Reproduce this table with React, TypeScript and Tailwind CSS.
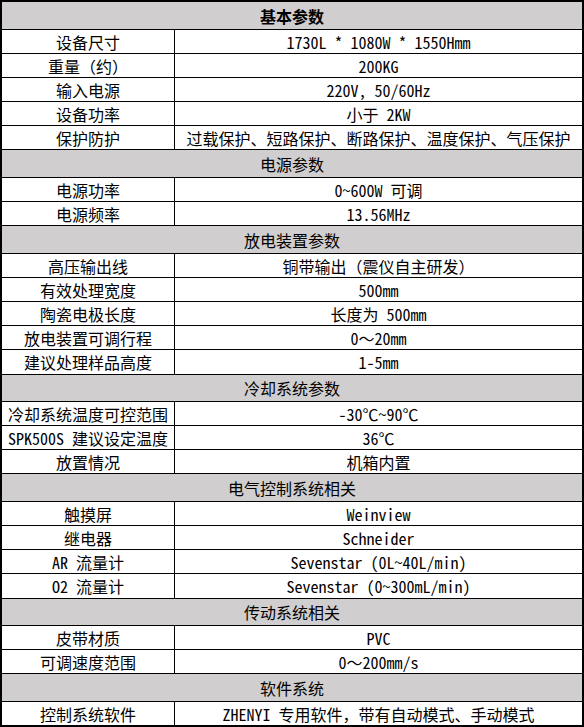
type Row = [string, string];

interface Section {
  title: string;
  rows: Row[];
}

const sections: Section[] = [
  {
    title: "基本参数",
    rows: [
      ["设备尺寸", "1730L * 1080W * 1550Hmm"],
      ["重量（约）", "200KG"],
      ["输入电源", "220V, 50/60Hz"],
      ["设备功率", "小于 2KW"],
      ["保护防护", "过载保护、短路保护、断路保护、温度保护、气压保护"],
    ],
  },
  {
    title: "电源参数",
    rows: [
      ["电源功率", "0~600W 可调"],
      ["电源频率", "13.56MHz"],
    ],
  },
  {
    title: "放电装置参数",
    rows: [
      ["高压输出线", "铜带输出（震仪自主研发）"],
      ["有效处理宽度", "500mm"],
      ["陶瓷电极长度", "长度为 500mm"],
      ["放电装置可调行程", "0～20mm"],
      ["建议处理样品高度", "1-5mm"],
    ],
  },
  {
    title: "冷却系统参数",
    rows: [
      ["冷却系统温度可控范围", "-30℃~90℃"],
      ["SPK500S 建议设定温度", "36℃"],
      ["放置情况", "机箱内置"],
    ],
  },
  {
    title: "电气控制系统相关",
    rows: [
      ["触摸屏", "Weinview"],
      ["继电器", "Schneider"],
      ["AR 流量计", "Sevenstar (0L~40L/min)"],
      ["O2 流量计", "Sevenstar (0~300mL/min)"],
    ],
  },
  {
    title: "传动系统相关",
    rows: [
      ["皮带材质", "PVC"],
      ["可调速度范围", "0～200mm/s"],
    ],
  },
  {
    title: "软件系统",
    rows: [["控制系统软件", "ZHENYI 专用软件，带有自动模式、手动模式"]],
  },
];

const font = {
  fontFamily:
    '"Noto Sans Mono CJK SC", "Noto Sans CJK SC", "Liberation Mono", monospace',
};

export default function App() {
  return (
    <div className="w-[584px] h-[727px] bg-white">
      <div
        className="w-[584px] border-2 border-black text-[16px] leading-none text-black"
        style={font}
      >
        {sections.map((s, si) => (
          <div key={s.title}>
            <div
              className={`flex items-center justify-center bg-[#d0cece] ${
                si === 0 ? "h-[27px] font-bold" : "h-[27.7px] border-t border-black"
              }`}
            >
              {s.title}
            </div>
            {s.rows.map(([k, v]) => (
              <div key={k} className="flex h-[24.1px] border-t border-black">
                <div className="w-[173px] shrink-0 flex items-center justify-center border-r border-black whitespace-nowrap">
                  {k}
                </div>
                <div className="flex-1 flex items-center justify-center whitespace-nowrap">
                  {v}
                </div>
              </div>
            ))}
          </div>
        ))}
      </div>
    </div>
  );
}
